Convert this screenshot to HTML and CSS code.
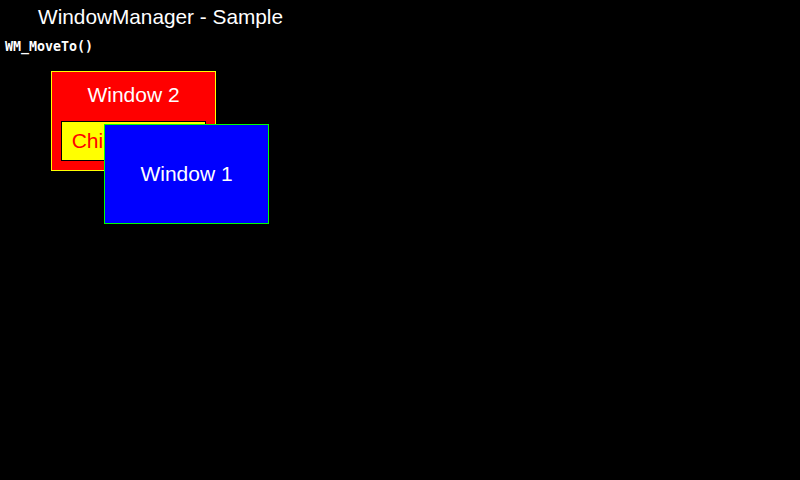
FILE: index.html
```html
<!DOCTYPE html>
<html>
<head>
<meta charset="utf-8">
<link rel="stylesheet" href="styles.css">
</head>
<body>
<div class="screen">
  <h1 class="title">WindowManager - Sample</h1>
  <div class="func">WM_MoveTo()</div>
  <div class="desktop">
    <div class="win win2">
      <div class="win2-label">Window 2</div>
      <div class="child">Child window</div>
    </div>
    <div class="win win1">Window 1</div>
  </div>
</div>
</body>
</html>
```
FILE: styles.css
```css
html, body {
  margin: 0;
  padding: 0;
  background: #000;
}
.screen {
  width: 800px;
  height: 480px;
  position: relative;
  background: #000;
  overflow: hidden;
}
.title {
  margin: 0;
  padding: 5px 0 0 38px;
  font: normal 20.8px/24px "Liberation Sans", Arial, sans-serif;
  color: #fff;
}
.func {
  margin-top: 10px;
  padding-left: 5px;
  font: bold 13.3px/16px "DejaVu Sans Mono", monospace;
  color: #fff;
}
.desktop {
  position: absolute;
  inset: 0;
}
.win {
  position: absolute;
  box-sizing: border-box;
  width: 165px;
  height: 100px;
  font: 21px/24px "Liberation Sans", Arial, sans-serif;
  color: #fff;
}
.win2 {
  left: 51px;
  top: 71px;
  background: #f00;
  border: 1px solid #ff0;
}
.win2-label {
  padding-top: 11px;
  text-align: center;
}
.child {
  position: absolute;
  left: 9px;
  top: 49px;
  box-sizing: border-box;
  width: 145px;
  height: 40px;
  background: #ff0;
  border: 1px solid #000;
  color: #f00;
  display: flex;
  align-items: center;
  justify-content: center;
}
.win1 {
  left: 104px;
  top: 124px;
  background: #00f;
  border: 1px solid #0f0;
  display: flex;
  align-items: center;
  justify-content: center;
}
```
